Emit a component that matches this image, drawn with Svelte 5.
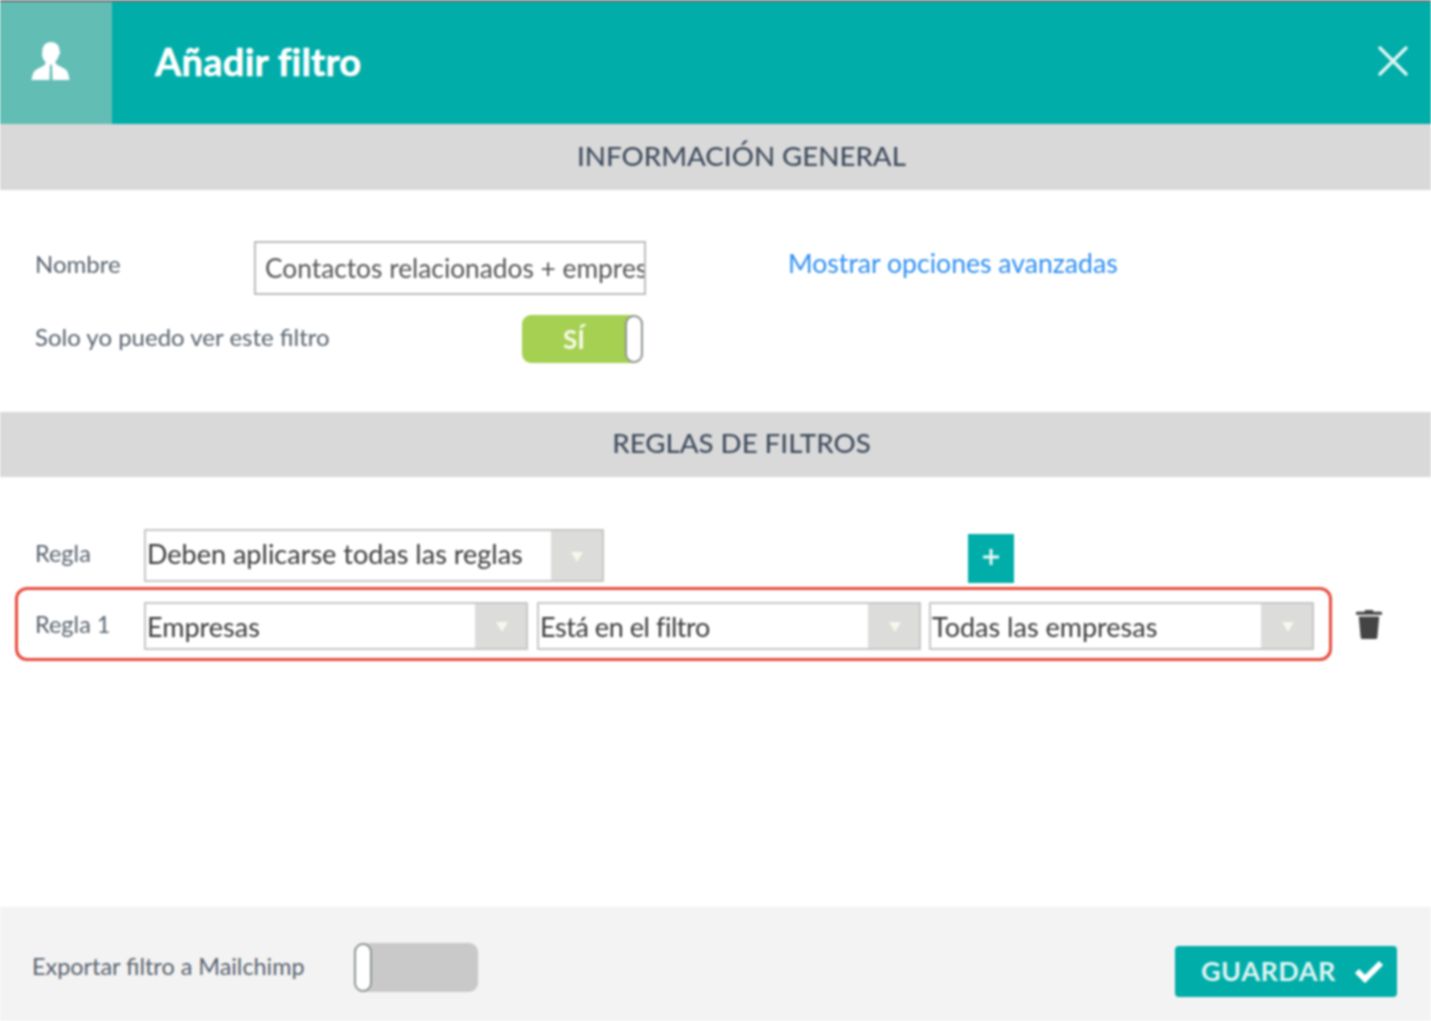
<script>
  const rules = [
    { text: 'Empresas', cls: 'w384 gap9' },
    { text: 'Está en el filtro', cls: 'w384 gap8 tight' },
    { text: 'Todas las empresas', cls: 'w385' }
  ];
</script>

<div class="page">
  <div class="strip"></div>
  <header class="head">
    <div class="iconbox">
      <svg width="42" height="42" viewBox="0 0 42 42" fill="#fff">
        <path d="M21 0c5 0 8.500 3.500 8.500 8.500 0 1 1 1.500.5 3-.4 1-1 1.200-1.300 2.300-.5 2-1.700 4-3 5.200-.3 1.500 0 2.500 1 3.400 3 2 8.800 4 10.500 6.800 1 2 1.800 5 2.300 8.800H22.500l-.5-16-1 1.500-1-1.500-.5 16H1.500C2 35 2.800 32 3.800 30c1.700-2.800 7.500-4.800 10.500-6.800 1-.9 1.300-1.900 1-3.400-1.300-1.200-2.500-3.200-3-5.200C12 13.500 12 12 12.300 8.500 12.800 3.500 16 0 21 0z"/>
      </svg>
    </div>
    <h1>Añadir filtro</h1>
    <svg class="close" width="30" height="30" viewBox="0 0 30 30">
      <path d="M2 2 28 28M28 2 2 28" stroke="#dff5f3" stroke-width="3.400" stroke-linecap="round"/>
    </svg>
  </header>

  <div class="bar">INFORMACIÓN GENERAL</div>
  <section class="general">
    <div class="row first">
      <span class="label name">Nombre</span>
      <div class="input"><span>Contactos relacionados + empresas</span></div>
      <a class="link" href="#top">Mostrar opciones avanzadas</a>
    </div>
    <div class="row second">
      <span class="label private">Solo yo puedo ver este filtro</span>
      <div class="toggle on"><span class="sw">SÍ</span><i class="knob"></i></div>
    </div>
  </section>

  <div class="bar short">REGLAS DE FILTROS</div>
  <section class="rules">
    <div class="row ruleHead">
      <span class="label rlabel">Regla</span>
      <div class="select w460">
        <span class="val">Deben aplicarse todas las reglas</span>
        <span class="arrow"><i></i></span>
      </div>
      <button class="plus" aria-label="Añadir">
        <svg width="18" height="18" viewBox="0 0 18 18"><path d="M9 1v16M1 9h16" stroke="#e6f7f6" stroke-width="3"/></svg>
      </button>
    </div>
    <div class="row ruleRow">
      <div class="redbox">
        <span class="label rlabel">Regla 1</span>
        {#each rules as r}
          <div class="select {r.cls}">
            <span class="val">{r.text}</span>
            <span class="arrow"><i></i></span>
          </div>
        {/each}
      </div>
      <svg class="trash" width="26" height="30" viewBox="0 0 28 32" preserveAspectRatio="none" fill="#444">
        <path d="M10 1h8l1 2h8a1 1 0 0 1 1 1v2H0V4a1 1 0 0 1 1-1h8z"/>
        <path d="M3 8h22l-2 22a2 2 0 0 1-2 2H7a2 2 0 0 1-2-2z"/>
      </svg>
    </div>
  </section>

  <footer class="foot">
    <span class="label export">Exportar filtro a Mailchimp</span>
    <div class="toggle off"><i class="knob"></i></div>
    <button class="save">GUARDAR
      <svg width="30" height="24" viewBox="0 0 30 24"><path d="M3 12l8 8L27 4" fill="none" stroke="#fff" stroke-width="6"/></svg>
    </button>
  </footer>
</div>

<style>
  :global(body) { margin: 0; background: #fff; }
  .page {
    width: 1431px; height: 1021px; overflow: hidden; display: flex; flex-direction: column;
    font-family: Lato, "Noto Sans", sans-serif; color: #4d5763; filter: blur(0.8px);
  }
  .strip { height: 2px; background: #6f7474; flex: none; }
  .head { height: 122px; flex: none; background: #00ada9; display: flex; align-items: center; }
  .iconbox { width: 112px; box-sizing: border-box; padding-right: 11px; align-self: stretch; background: #62bdb4; display: flex; align-items: center; justify-content: center; }
  h1 { margin: 0 0 4px 43px; font-size: 38px; font-weight: 700; letter-spacing: .25px; -webkit-text-stroke: .6px #fff; color: #fff; flex: 1; }
  .close { margin-right: 23px; margin-bottom: 4px; }
  .bar {
    height: 66px; flex: none; background: #d9d9d9; display: flex; align-items: center; justify-content: center;
    padding-left: 52px; box-sizing: border-box; font-size: 27.7px; font-weight: 500; color: #414e5f; padding-bottom: 4px;
  }
  .short { height: 65px; }
  .general { height: 222px; flex: none; box-sizing: border-box; padding: 51px 0 0 35px; }
  .row { display: flex; align-items: center; }
  .label { font-size: 24px; color: #58626e; flex: none; }
  .name { width: 219px; padding-bottom: 10px; }
  .input {
    width: 392px; height: 54px; box-sizing: border-box; border: 2px solid #bdbdbd; padding-left: 9px;
    display: flex; align-items: center; overflow: hidden; white-space: nowrap; font-size: 26.3px; color: #555;
  }
  .link { margin-left: 142px; font-size: 26.6px; color: #2f8ff2; text-decoration: none; padding-bottom: 10px; }
  .second { margin-top: 20px; }
  .private { width: 487px; padding-bottom: 5px; }
  .toggle { width: 121px; height: 48px; border-radius: 9px; display: flex; align-items: center; flex: none; position: relative; box-sizing: border-box; }
  .on { background: #a5d052; justify-content: flex-end; }
  .off { background: #c9c9c9; width: 124px; height: 49px; margin-top: 7px; }
  .sw { position: absolute; left: 41px; font-size: 26px; font-weight: 700; color: #f6fbe9; }
  .knob { width: 18px; height: 100%; box-sizing: border-box; background: #fff; border: 2px solid #8f9494; border-radius: 9px; display: block; }
  .rules { flex: 1; box-sizing: border-box; padding-top: 52px; }
  .ruleHead { padding-left: 35px; align-items: flex-start; }
  .ruleHead .rlabel { padding-bottom: 7px; }
  .rlabel { width: 109px; padding-bottom: 4px; align-self: center; font-size: 23.500px; }
  .select {
    height: 48px; box-sizing: border-box; border: 2px solid #c6c7c6; display: flex; align-items: stretch; flex: none;
    font-size: 27px; color: #3c3c3c; background: #fff;
  }
  .w460 { width: 460px; height: 53px; }
  .w460 .val { padding-bottom: 5px; }
  .w384 { width: 384px; }
  .gap9 { margin-right: 9px; }
  .gap8 { margin-right: 8px; }
  .w385 { width: 385px; }
  .tight .val { letter-spacing: -.45px; }
  .val { flex: 1; padding-left: 1px; display: flex; align-items: center; white-space: nowrap; }
  .arrow { width: 51px; box-sizing: border-box; padding-left: 3px; background: #dcdcda; display: flex; align-items: center; justify-content: center; }
  .arrow i { width: 0; height: 0; margin-top: 2px; border-left: 6px solid transparent; border-right: 6px solid transparent; border-top: 10px solid #f7f7ee; }
  .w460 .arrow { padding-left: 0; }
  .plus {
    margin: 5px 0 0 364px; width: 46px; height: 49px; padding: 0 0 3px; border: 0; background: #00ada9;
    display: flex; align-items: center; justify-content: center;
  }
  .ruleRow { margin-top: 4px; margin-left: 15px; }
  .redbox {
    width: 1317px; height: 74px; box-sizing: border-box; border: 3px solid #e74c3c; border-radius: 12px;
    padding: 12px 0 8px 17px; display: flex; align-items: center;
  }
  .trash { margin-left: 24px; flex: none; margin-bottom: 1px; }
  .foot { height: 114px; flex: none; background: #f3f3f3; display: flex; align-items: center; padding-left: 32px; box-sizing: border-box; }
  .export { width: 322px; margin-top: 4px; font-size: 23.400px; }
  .save {
    margin-left: 697px; margin-top: 15px; width: 222px; height: 51px; background: #00ada9; border: 0; border-radius: 4px; padding: 0 13px 2px 26px;
    display: flex; align-items: center; justify-content: space-between; font-family: inherit; font-size: 27px; font-weight: 700;
    color: #dff5f3; letter-spacing: .5px; box-sizing: border-box;
  }
</style>
